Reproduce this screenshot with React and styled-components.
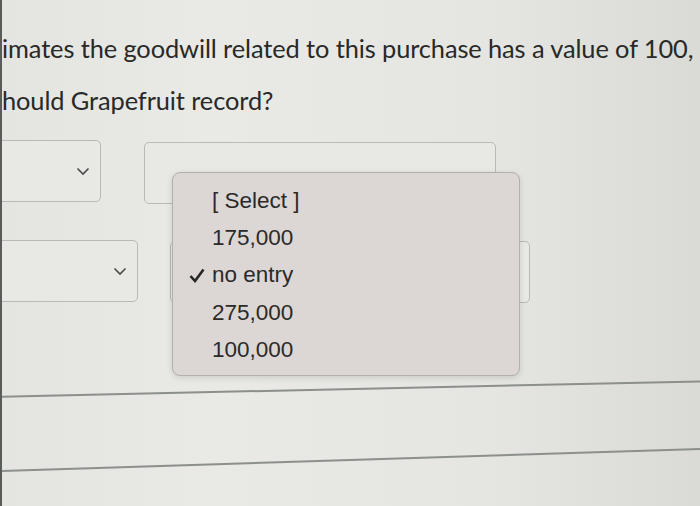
import styled, { createGlobalStyle } from "styled-components";

const GlobalStyle = createGlobalStyle`
  html, body {
    margin: 0;
    padding: 0;
    height: 100%;
  }
  body {
    background: linear-gradient(90deg, #e4e4e1 0%, #e9e9e6 30%, #e5e5e2 70%, #dadad6 100%);
    overflow: hidden;
  }
`;

const Page = styled.div`
  position: relative;
  width: 700px;
  height: 506px;
  border-left: 2px solid #5a5c5a;
  box-sizing: border-box;
  overflow: hidden;
  font-family: Lato, "Open Sans", sans-serif;
  color: #282928;
`;

const Question = styled.p`
  margin: 0;
  padding-top: 22px;
  font-size: 25.4px;
  line-height: 52px;
  white-space: nowrap;
  letter-spacing: -0.1px;
`;

const Form = styled.div`
  display: flex;
  flex-direction: column;
  gap: 36px;
  margin-top: 14px;
`;

const Row = styled.div`
  display: flex;
  gap: ${(p) => p.gap}px;
  align-items: flex-start;
`;

const Select = styled.div`
  display: flex;
  align-items: center;
  justify-content: flex-end;
  box-sizing: border-box;
  width: ${(p) => p.width}px;
  height: 62px;
  margin-left: ${(p) => p.offset || 0}px;
  margin-top: ${(p) => p.top || 0}px;
  padding-right: 10px;
  border: 1px solid #b9bab7;
  border-radius: 5px;
  background: #e8e8e5;
`;

const Chevron = () => (
  <svg width="14" height="9" viewBox="0 0 14 9">
    <path d="M1.5 1.5 L7 7 L12.5 1.5" fill="none" stroke="#4a4b4a" strokeWidth="1.6" />
  </svg>
);

const Menu = styled.ul`
  position: absolute;
  left: 170px;
  top: 172px;
  width: 348px;
  height: 204px;
  box-sizing: border-box;
  margin: 0;
  padding: 9px 0 0;
  list-style: none;
  background: #dcd7d5;
  border: 1px solid #b4b0ae;
  border-radius: 8px;
  box-shadow: 0 2px 6px rgba(0, 0, 0, 0.12);
  font-family: "Liberation Sans", Arial, sans-serif;
  font-size: 22.5px;
  color: #2a2a2a;
`;

const Item = styled.li`
  display: flex;
  align-items: center;
  height: 37.3px;
  padding-left: 16px;
`;

const Tick = styled.span`
  display: inline-flex;
  width: 23px;
`;

const Check = () => (
  <svg width="16" height="15" viewBox="0 0 16 15">
    <path d="M1.5 8 L6 13 L14.5 1.5" fill="none" stroke="#262626" strokeWidth="2.6" />
  </svg>
);

const Rule = styled.div`
  position: relative;
  width: 760px;
  margin-left: -30px;
  height: 2px;
  background: #8b908c;
  transform: rotate(${(p) => p.angle}deg);
  margin-top: ${(p) => p.top}px;
`;

const options = ["[ Select ]", "175,000", "no entry", "275,000", "100,000"];

export default function App() {
  return (
    <Page>
      <GlobalStyle />
      <Question>
        imates the goodwill related to this purchase has a value of 100,
        <br />
        hould Grapefruit record?
      </Question>
      <Form>
        <Row gap={43}>
          <Select width={123} offset={-24}>
            <Chevron />
          </Select>
          <Select width={352} top={2} />
        </Row>
        <Row gap={32}>
          <Select width={160} offset={-24}>
            <Chevron />
          </Select>
          <Select width={360} top={1}>
            <Chevron />
          </Select>
        </Row>
      </Form>
      <Rule angle={-1.25} top={85} />
      <Rule angle={-1.8} top={69} />
      <Menu>
        {options.map((o) => (
          <Item key={o}>
            <Tick>{o === "no entry" && <Check />}</Tick>
            {o}
          </Item>
        ))}
      </Menu>
    </Page>
  );
}
